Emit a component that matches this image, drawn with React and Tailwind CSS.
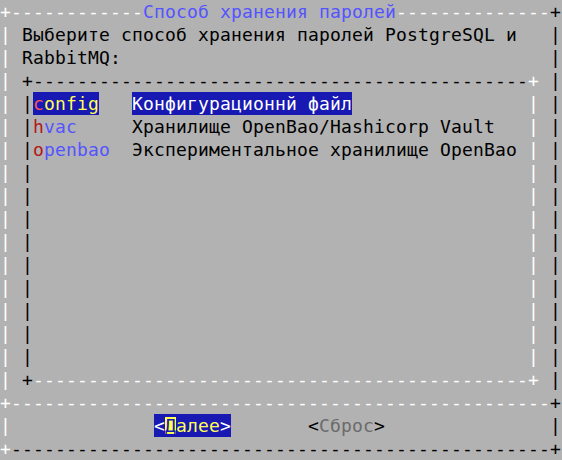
import React from "react";

const COLS = 51;

// palette (linux console style)
const WHITE = "text-white";
const BLACK = "text-black";
const TITLE = "text-[#5454ff]";
const HOT = "text-[#b21818]";
const TAG = "text-[#5454ff]";
const SEL_HOT = "bg-[#1818b2] text-[#ff5454]";
const SEL_TAG = "bg-[#1818b2] text-[#ffff54]";
const SEL_DESC = "bg-[#1818b2] text-white";
const BTN_EDGE = "bg-[#1818b2] text-white";
const BTN_TEXT = "bg-[#1818b2] text-[#ffff54]";
const BTN_OFF = "text-[#6b6b6b]";

const dash = (n) => "-".repeat(n);

// put text into a row of terminal cells
function buildRow(items) {
  const cells = Array.from({ length: COLS }, () => ({ ch: " ", cls: "" }));
  items.forEach(([col, text, cls]) => {
    [...text].forEach((ch, i) => {
      cells[col + i] = { ch, cls };
    });
  });
  return cells;
}

const side = [
  [0, "|", WHITE],
  [50, "|", BLACK],
];
const listSide = [
  [2, "|", BLACK],
  [48, "|", WHITE],
];

const rows = [
  [
    [0, "+", WHITE],
    [1, dash(12), WHITE],
    [13, "Способ хранения паролей", TITLE],
    [36, dash(14), WHITE],
    [50, "+", BLACK],
  ],
  [...side, [2, "Выберите способ хранения паролей PostgreSQL и", BLACK]],
  [...side, [2, "RabbitMQ:", BLACK]],
  [...side, [2, "+", BLACK], [3, dash(45), BLACK], [48, "+", WHITE]],
  [
    ...side,
    ...listSide,
    [3, "c", SEL_HOT],
    [4, "onfig", SEL_TAG],
    [12, "Конфигурационнй файл", SEL_DESC],
  ],
  [
    ...side,
    ...listSide,
    [3, "h", HOT],
    [4, "vac", TAG],
    [12, "Хранилище OpenBao/Hashicorp Vault", BLACK],
  ],
  [
    ...side,
    ...listSide,
    [3, "o", HOT],
    [4, "penbao", TAG],
    [12, "Экспериментальное хранилище OpenBao", BLACK],
  ],
  ...Array.from({ length: 9 }, () => [...side, ...listSide]),
  [...side, [2, "+", BLACK], [3, dash(45), WHITE], [48, "+", WHITE]],
  [[0, "+", WHITE], [1, dash(49), WHITE], [50, "+", BLACK]],
  [
    ...side,
    [14, "<", BTN_EDGE],
    [15, "Д", "cursor"],
    [16, "алее", BTN_TEXT],
    [20, ">", BTN_EDGE],
    [28, "<", BLACK],
    [29, "Сброс", BTN_OFF],
    [34, ">", BLACK],
  ],
  [[0, "+", WHITE], [1, dash(49), BLACK], [50, "+", BLACK]],
];

function Cell({ ch, cls }) {
  if (cls === "cursor") {
    return (
      <span className="inline-flex h-[23px] w-[11px] items-center justify-center bg-[#1818b2]">
        <span className="inline-block h-[17px] w-[11px] bg-[#ffff54] text-center leading-[17px] text-[#1818b2]">
          {ch}
        </span>
      </span>
    );
  }
  return (
    <span className={`inline-block h-[23px] w-[11px] text-center ${cls}`}>
      {ch}
    </span>
  );
}

export default function App() {
  return (
    <div className="h-[460px] w-[562px] overflow-hidden bg-[#b2b2b2] font-['DejaVu_Sans_Mono',monospace] text-[18px] leading-[23px] whitespace-pre">
      {rows.map((items, r) => (
        <div key={r} className="flex h-[23px]">
          {buildRow(items).map((c, i) => (
            <Cell key={i} ch={c.ch} cls={c.cls} />
          ))}
        </div>
      ))}
    </div>
  );
}
